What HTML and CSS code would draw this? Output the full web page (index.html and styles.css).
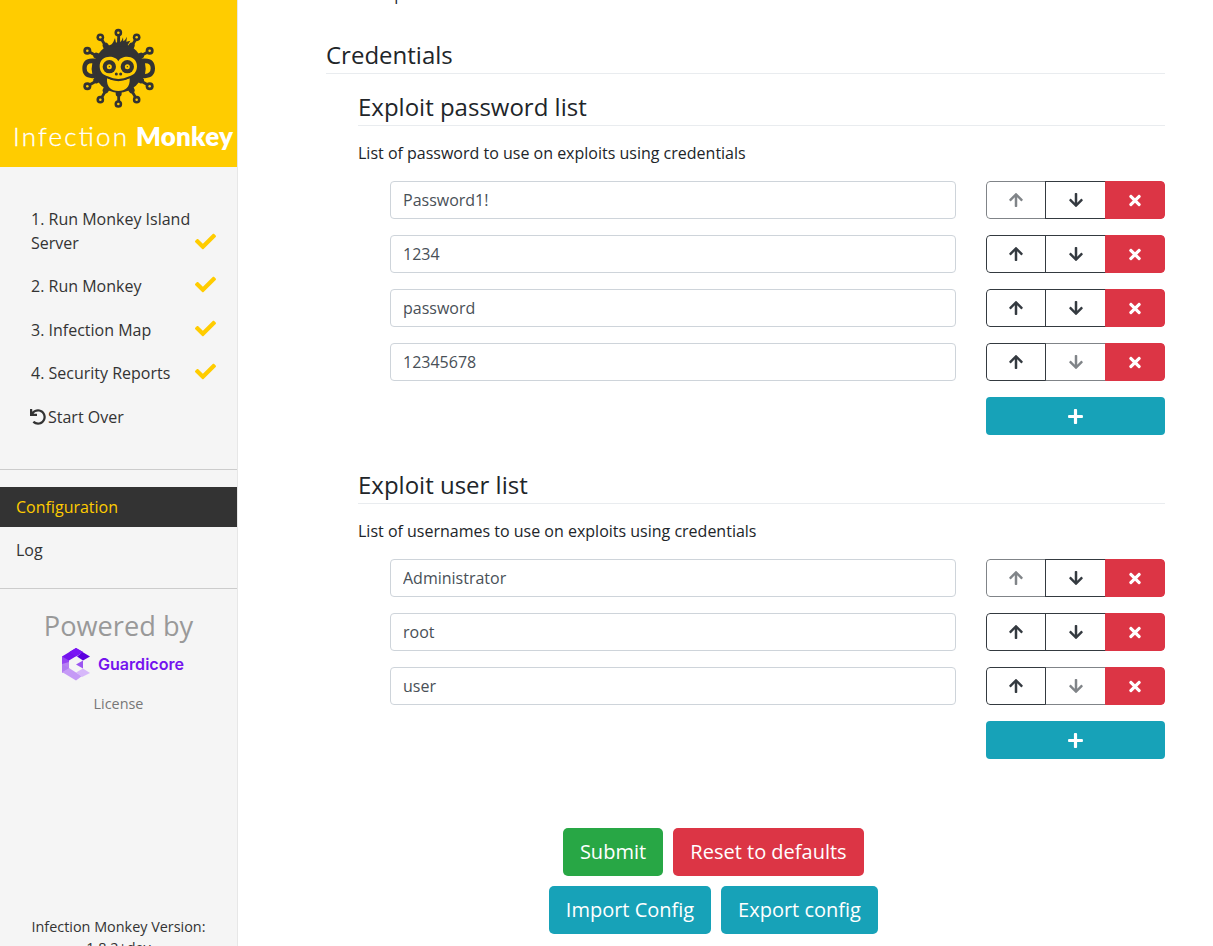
FILE: index.html
```html
<!DOCTYPE html>
<html lang="en">
<head>
<meta charset="utf-8">
<title>Infection Monkey</title>
<link rel="stylesheet" href="styles.css">
</head>
<body>
<svg class="sprite" aria-hidden="true">
  <symbol id="up" viewBox="0 0 448 512"><path d="M34.9 289.5l-22.2-22.2c-9.4-9.4-9.4-24.6 0-33.9L207 39c9.4-9.4 24.6-9.4 33.9 0l194.3 194.3c9.4 9.4 9.4 24.6 0 33.9L413 289.4c-9.5 9.5-25 9.3-34.3-.4L264 168.6V456c0 13.3-10.7 24-24 24h-32c-13.3 0-24-10.7-24-24V168.6L69.2 289.1c-9.3 9.8-24.8 10-34.3.4z"/></symbol>
  <symbol id="down" viewBox="0 0 448 512"><path d="M413.1 222.5l22.2 22.2c9.4 9.4 9.4 24.6 0 33.9L241 473c-9.4 9.4-24.6 9.4-33.9 0L12.7 278.6c-9.4-9.4-9.4-24.6 0-33.9l22.2-22.2c9.5-9.5 25-9.3 34.3.4L184 343.4V56c0-13.3 10.7-24 24-24h32c13.3 0 24 10.7 24 24v287.4l114.8-120.5c9.3-9.8 24.8-10 34.3-.4z"/></symbol>
  <symbol id="times" viewBox="0 0 352 512"><path d="M242.72 256l100.07-100.07c12.28-12.28 12.28-32.19 0-44.48l-22.24-22.24c-12.28-12.28-32.19-12.28-44.48 0L176 189.28 75.93 89.21c-12.28-12.28-32.19-12.28-44.48 0L9.21 111.45c-12.28 12.28-12.28 32.19 0 44.48L109.28 256 9.21 356.07c-12.28 12.28-12.28 32.19 0 44.48l22.24 22.24c12.28 12.28 32.2 12.28 44.48 0L176 322.72l100.07 100.07c12.28 12.28 32.2 12.28 44.48 0l22.24-22.24c12.28-12.28 12.28-32.19 0-44.48L242.72 256z"/></symbol>
  <symbol id="plus" viewBox="0 0 448 512"><path d="M416 208H272V64c0-17.67-14.33-32-32-32h-32c-17.67 0-32 14.33-32 32v144H32c-17.67 0-32 14.33-32 32v32c0 17.67 14.33 32 32 32h144v144c0 17.67 14.33 32 32 32h32c17.67 0 32-14.33 32-32V304h144c17.67 0 32-14.33 32-32v-32c0-17.67-14.33-32-32-32z"/></symbol>
  <symbol id="check" viewBox="0 0 512 512"><path d="M173.898 439.404l-166.4-166.4c-9.997-9.997-9.997-26.206 0-36.204l36.203-36.204c9.997-9.998 26.207-9.998 36.204 0L192 312.69 432.095 72.596c9.997-9.997 26.207-9.997 36.204 0l36.203 36.204c9.997 9.997 9.997 26.206 0 36.204l-294.4 294.401c-9.998 9.997-26.207 9.997-36.204-.001z"/></symbol>
  <symbol id="undo" viewBox="0 0 512 512"><path d="M212.333 224.333H12c-6.627 0-12-5.373-12-12V12C0 5.373 5.373 0 12 0h48c6.627 0 12 5.373 12 12v78.112C117.773 39.279 184.26 7.47 258.175 8.007c136.906.994 246.448 111.623 246.157 248.532C504.041 393.258 393.12 504 256.333 504c-64.089 0-122.496-24.313-166.51-64.215-5.099-4.622-5.334-12.554-.467-17.42l33.967-33.967c4.474-4.474 11.662-4.717 16.401-.525C170.76 415.336 211.58 432 256.333 432c97.268 0 176-78.716 176-176 0-97.267-78.716-176-176-176-58.496 0-110.28 28.476-142.274 72.333h98.274c6.627 0 12 5.373 12 12v48c0 6.627-5.373 12-12 12z"/></symbol>
</svg>
<div class="app">
  <aside class="sidebar">
    <div class="brand">
      <svg class="brand-art" viewBox="0 0 237 167">
        <g transform="translate(70 20) scale(.33333)">
          <path class="ink-line" d="M146 144V40M146 144L92 53M146 144L200 53M146 144L53 93M146 144L239 93M146 144L53 198M146 144L239 198M146 144L92 238M146 144L200 238M146 144V252"/>
          <path class="ink-flare" d="M107 77L185 211M185 77L107 211M79 107L213 181M79 181L213 107M146 144V221"/>
          <circle class="ink" cx="146" cy="144" r="74"/>
          <path class="ink" d="M120 80Q132 66 135 54L138 68L142 66L143 54H149L151 67Q156 62 159 52L160 64Q166 60 171 50L169 65L181 62L170 80Z"/>
          <g class="ink">
            <circle cx="145" cy="38" r="11.500"/><circle cx="91" cy="52" r="11.500"/><circle cx="200" cy="52" r="11.500"/><circle cx="52" cy="92" r="12"/><circle cx="239" cy="92" r="12"/><circle cx="52" cy="199" r="12"/><circle cx="239" cy="199" r="12"/><circle cx="91" cy="239" r="11.500"/><circle cx="200" cy="239" r="11.500"/><circle cx="145" cy="252" r="11.500"/>
          </g>
          <g class="gold">
            <circle cx="145" cy="38" r="3.800"/><circle cx="91" cy="52" r="3.800"/><circle cx="200" cy="52" r="3.800"/><circle cx="52" cy="92" r="3.800"/><circle cx="239" cy="92" r="3.800"/><circle cx="52" cy="199" r="3.800"/><circle cx="239" cy="199" r="3.800"/><circle cx="91" cy="239" r="3.800"/><circle cx="200" cy="239" r="3.800"/><circle cx="145" cy="252" r="3.800"/>
          </g>
          <path class="ink" d="M80 117C49 111 37 125 37 145S49 179 80 173ZM211 117C243 111 255 125 255 145S243 179 211 173Z"/>
          <path class="gold" d="M67 130Q50 129 50 145T67 162Q63 146 67 130ZM225 130Q242 129 242 145T225 162Q229 146 225 130Z"/>
          <path class="gold" d="M145 124C136 104 89 104 89 139C89 157 101 166 113 169Q145 185 178 169C190 166 201 157 201 139C201 104 154 104 145 124Z"/>
          <circle class="ink" cx="118" cy="140" r="20"/><circle class="ink" cx="172" cy="140" r="20"/>
          <circle class="gold" cx="118" cy="140" r="7.500"/><circle class="gold" cx="172" cy="140" r="7.500"/>
          <circle class="ink" cx="118" cy="140" r="2"/><circle class="ink" cx="172" cy="140" r="2"/>
          <circle class="ink" cx="139" cy="162" r="4.500"/><circle class="ink" cx="152" cy="162" r="4.500"/>
          <path class="gold" d="M111 174Q145 193 179 174C181 202 166 213 145 213S109 202 111 174Z"/>
          <path class="smile" d="M106 171Q145 190 185 171"/>
        </g>
        <text class="word-thin" x="13" y="146" textLength="114">Infection</text>
        <text class="word-bold" x="136" y="146" textLength="97">Monkey</text>
      </svg>
    </div>
    <ul class="steps">
      <li><span>1. Run Monkey Island Server</span><svg class="check"><use href="#check"/></svg></li>
      <li><span>2. Run Monkey</span><svg class="check"><use href="#check"/></svg></li>
      <li><span>3. Infection Map</span><svg class="check"><use href="#check"/></svg></li>
      <li><span>4. Security Reports</span><svg class="check"><use href="#check"/></svg></li>
      <li class="restart"><svg class="undo"><use href="#undo"/></svg><span>Start Over</span></li>
    </ul>
    <nav class="links"><a class="active">Configuration</a><a>Log</a></nav>
    <div class="powered">
      <div class="powered-title">Powered by</div>
      <svg class="guardicore" viewBox="0 0 126 34">
        <path fill="#7413ee" d="M0 8.500L14 0l7 4-14 8.500v5L0 21z"/>
        <path fill="#9545f1" d="M0 8.500l7 4v8L0 17z"/>
        <path fill="#7a16f5" d="M7 4.300L14 0l7 4-7 4.500z"/>
        <path fill="#5b00df" d="M20.500 4L28 8.500l-7 4-6-4z"/>
        <path fill="#b780f3" d="M0 16l7-2v8l-7 3z"/>
        <path fill="#c59af6" d="M0 24l7-4 7 4.500 6 3.500-6 4.500z"/>
        <path fill="#b07bf0" d="M0 16l7 4-7 4z"/>
        <path fill="#d7b8fa" d="M14 24.500l7-4 7 4.500-8 4z"/>
        <path fill="#9b55f1" d="M14 16.500l7-4v8z"/>
        <text class="guardicore-name" x="36" y="21.500" textLength="86" lengthAdjust="spacingAndGlyphs">Guardicore</text>
      </svg>
      <a class="license">License</a>
    </div>
    <div class="version">Infection Monkey Version:<br>1.8.2+dev</div>
  </aside>
  <main class="content">
    <div class="previous">Exploits</div>
    <h2>Credentials</h2>
    <section class="group">
      <h2>Exploit password list</h2>
      <p>List of password to use on exploits using credentials</p>
      <div class="rows">
        <div class="row"><input value="Password1!"><div class="buttons"><button disabled><svg class="i14"><use href="#up"/></svg></button><button><svg class="i14"><use href="#down"/></svg></button><button class="remove"><svg class="i11"><use href="#times"/></svg></button></div></div>
        <div class="row"><input value="1234"><div class="buttons"><button><svg class="i14"><use href="#up"/></svg></button><button><svg class="i14"><use href="#down"/></svg></button><button class="remove"><svg class="i11"><use href="#times"/></svg></button></div></div>
        <div class="row"><input value="password"><div class="buttons"><button><svg class="i14"><use href="#up"/></svg></button><button><svg class="i14"><use href="#down"/></svg></button><button class="remove"><svg class="i11"><use href="#times"/></svg></button></div></div>
        <div class="row"><input value="12345678"><div class="buttons"><button><svg class="i14"><use href="#up"/></svg></button><button disabled><svg class="i14"><use href="#down"/></svg></button><button class="remove"><svg class="i11"><use href="#times"/></svg></button></div></div>
        <button class="add"><svg class="i15"><use href="#plus"/></svg></button>
      </div>
    </section>
    <section class="group users">
      <h2>Exploit user list</h2>
      <p>List of usernames to use on exploits using credentials</p>
      <div class="rows">
        <div class="row"><input value="Administrator"><div class="buttons"><button disabled><svg class="i14"><use href="#up"/></svg></button><button><svg class="i14"><use href="#down"/></svg></button><button class="remove"><svg class="i11"><use href="#times"/></svg></button></div></div>
        <div class="row"><input value="root"><div class="buttons"><button><svg class="i14"><use href="#up"/></svg></button><button><svg class="i14"><use href="#down"/></svg></button><button class="remove"><svg class="i11"><use href="#times"/></svg></button></div></div>
        <div class="row"><input value="user"><div class="buttons"><button><svg class="i14"><use href="#up"/></svg></button><button disabled><svg class="i14"><use href="#down"/></svg></button><button class="remove"><svg class="i11"><use href="#times"/></svg></button></div></div>
        <button class="add"><svg class="i15"><use href="#plus"/></svg></button>
      </div>
    </section>
    <div class="actions">
      <div class="pair"><button class="submit">Submit</button><button class="reset">Reset to defaults</button></div>
      <div class="pair"><button class="import">Import Config</button><button class="export">Export config</button></div>
    </div>
  </main>
</div>
</body>
</html>
```

FILE: styles.css
```css
* { box-sizing: border-box; }
body { margin: 0; font: 16px/24px "Open Sans", sans-serif; color: #212529; background: #fff; }
button, input { font: inherit; }
svg { fill: currentColor; flex: none; }
.sprite { display: none; }
.app { display: flex; height: 946px; overflow: hidden; }

.sidebar { width: 238px; flex: none; background: #f5f5f5; border-right: 1px solid #e7e7e7; color: #333; display: flex; flex-direction: column; overflow: hidden; }
.brand { height: 167px; background: #fc0; flex: none; }
.brand-art { display: block; width: 237px; height: 167px; }
.ink { fill: #333; }
.gold { fill: #fc0; }
.ink-line { fill: none; stroke: #333; stroke-width: 8.5; }
.ink-flare { fill: none; stroke: #333; stroke-width: 18; stroke-linecap: round; }
.smile { fill: none; stroke: #333; stroke-width: 4; stroke-linecap: round; }
.word-thin { font: 300 26px "Lato", sans-serif; fill: #fff; stroke: #fff; stroke-width: .35; }
.word-bold { font: 800 26px "Lato", sans-serif; fill: #fff; }

.steps { list-style: none; margin: 40px 0 0; padding: 0 21px 0 31px; height: 262px; flex: none; }
.steps li { display: flex; align-items: flex-end; justify-content: space-between; margin-bottom: 19.4px; }
.steps span { max-width: 162px; }
.check { width: 21px; height: 21px; color: #fc0; margin-bottom: 3px; }
.steps .restart { justify-content: flex-start; gap: 2px; margin-left: -1px; }
.undo { width: 16px; height: 16px; margin-bottom: 4px; }
.links { height: 120px; flex: none; border: solid #ccc; border-width: 1px 0; padding-top: 17px; }
.links a { display: block; height: 40px; padding: 8px 16px; margin-bottom: 3px; }
.links .active { background: #333; color: #fc0; }
.powered { display: flex; flex-direction: column; align-items: center; padding-top: 17px; flex: none; }
.powered-title { font-size: 27.2px; line-height: 39px; color: #999; }
.guardicore { width: 126px; height: 34px; margin: 3px 0 0 12px; overflow: visible; }
.guardicore-name { font: 600 16px "Inter", sans-serif; fill: #7413ee; }
.license { font-size: 14.4px; line-height: 21px; color: #777; margin-top: 11px; }
.version { margin-top: auto; margin-bottom: -12px; text-align: center; font-size: 14.4px; line-height: 21px; }

.content { flex: 1; padding: 0 48px 0 88px; overflow: hidden; }
.previous { height: 3px; padding-left: 51px; line-height: 24px; margin-top: -18px; margin-bottom: 55px; }
h2 { font-size: 24px; line-height: 29px; font-weight: 400; margin: 0; height: 34px; border-bottom: 1px solid #e9ecef; }
.group { padding: 18px 0 0 32px; }
.group p { margin: 15px 0 16px; }
.rows { padding-left: 32px; display: flex; flex-direction: column; gap: 16px; }
.row { display: flex; justify-content: space-between; }
.row input { width: 566px; height: 38px; padding: 6px 12px; border: 1px solid #ced4da; border-radius: 4px; color: #495057; }
.buttons { display: flex; width: 179px; border-radius: 4px; overflow: hidden; }
.buttons button { flex: 1; height: 38px; padding: 0; display: flex; align-items: center; justify-content: center; background: #fff; color: #343a40; border: 1px solid #343a40; }
.buttons button:first-child { border-radius: 4px 0 0 4px; }
.buttons button:nth-child(2) { margin-left: -1px; padding-left: 1px; }
.buttons button:disabled { color: #808488; border-color: #808488; }
.buttons button:disabled + button, .buttons button:first-child:not(:disabled) { position: relative; }
.buttons button:first-child:not(:disabled) { background: transparent; }
.buttons .remove { background: #dc3545; border-color: #dc3545; color: #fff; margin-left: -1px; border-radius: 0 4px 4px 0; position: relative; }
.i14 { width: 14px; height: 16px; }
.i15 { width: 15px; height: 17px; }
.i11 { width: 12px; height: 17px; }
.add { width: 179px; height: 38px; align-self: flex-end; display: flex; align-items: center; justify-content: center; padding: 0; border: 0; border-radius: 4px; background: #17a2b8; color: #fff; }
.users { padding-top: 35px; }
.actions { margin: 69px 0 0 -64px; display: flex; flex-direction: column; gap: 10px; }
.group + .actions { margin-left: -64px; }
.pair { display: flex; gap: 10px; justify-content: center; }
.pair button { height: 48px; border: 0; border-radius: 5px; padding: 0; font-size: 20px; line-height: 30px; color: #fff; }
.submit { width: 100px; background: #28a745; }
.reset { width: 191px; background: #dc3545; }
.import { width: 162px; background: #17a2b8; }
.export { width: 157px; background: #17a2b8; }
```
